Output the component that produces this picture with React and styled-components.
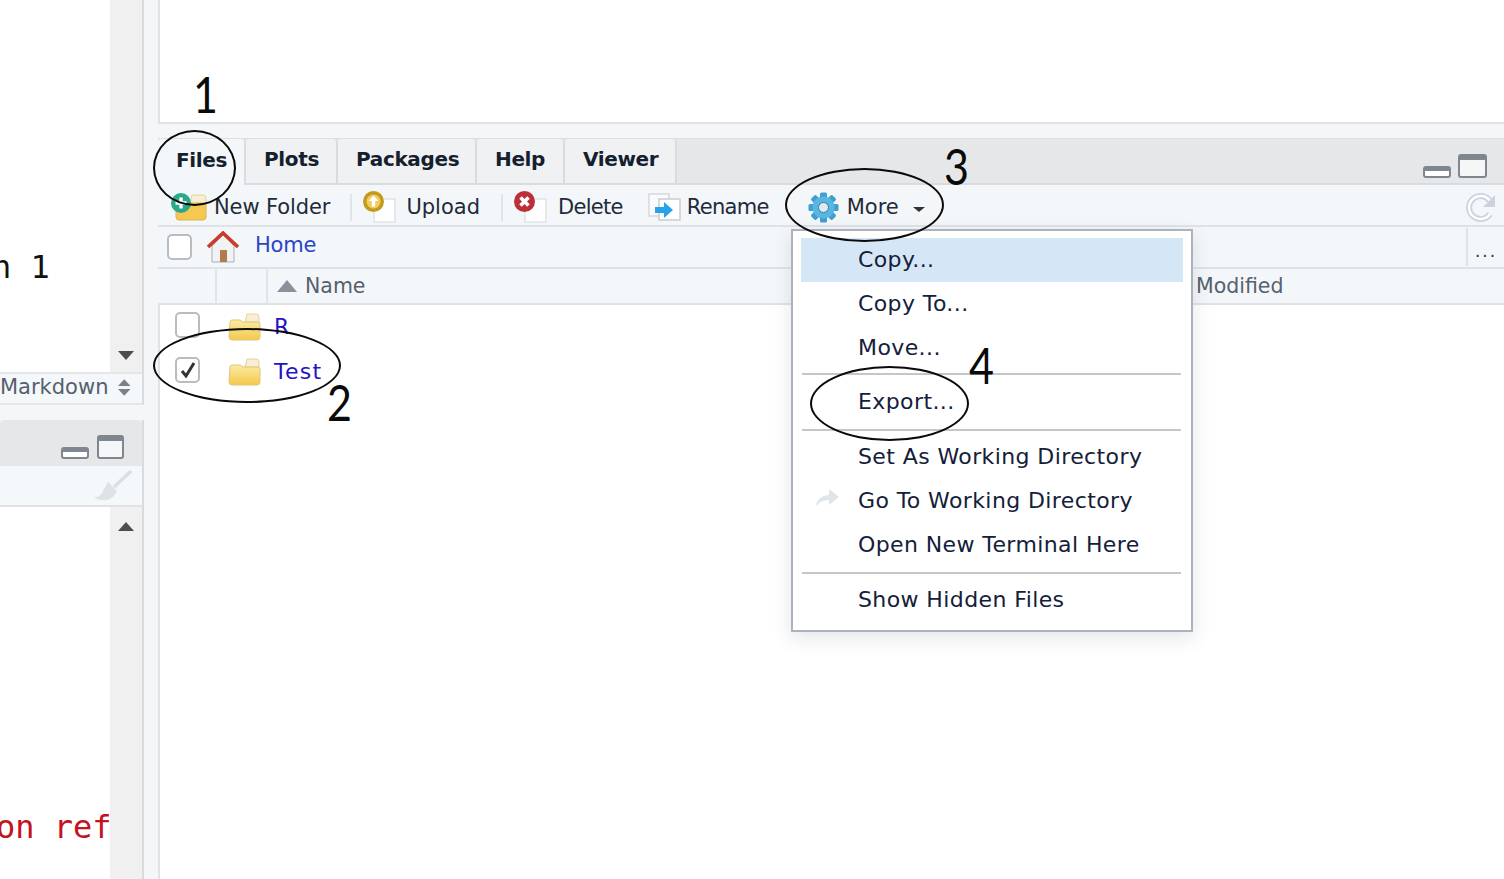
import React from 'react'
import styled, { createGlobalStyle } from 'styled-components'

const GlobalStyle = createGlobalStyle`
    html, body {
        margin: 0;
        padding: 0;
        height: 100%;
        overflow: hidden;
        background: #f4f6f8;
    }
    * {
        box-sizing: border-box;
    }
`

const Page = styled.div`
    position: relative;
    width: 1504px;
    height: 879px;
    display: flex;
    overflow: hidden;
    font-family: 'DejaVu Sans', Verdana, sans-serif;
    color: #1f2a3a;
`

/* left column */
const LeftColumn = styled.div`
    width: 144px;
    flex: none;
    display: flex;
    flex-direction: column;
`

const SourcePane = styled.div`
    height: 405px;
    flex: none;
    display: flex;
    flex-direction: column;
    border-right: 2px solid #d7dce1;
    border-bottom: 2px solid #e3e7ea;
`

const EditorBody = styled.div`
    flex: 1;
    display: flex;
    min-height: 0;
`

const CodeArea = styled.div`
    flex: 1;
    min-width: 0;
    overflow: hidden;
    background: #fff;
    padding-top: ${(p) => p.$top}px;
`

const CodeLine = styled.div`
    font-family: 'DejaVu Sans Mono', monospace;
    font-size: 32px;
    line-height: 36px;
    white-space: pre;
    color: ${(p) => p.$color};
    margin-left: ${(p) => p.$shift}px;
`

const ScrollTrack = styled.div`
    width: 32px;
    flex: none;
    background: #f0f0f1;
    display: flex;
    flex-direction: column;
    align-items: center;
    justify-content: ${(p) => (p.$up ? 'flex-start' : 'flex-end')};
    padding: ${(p) => (p.$up ? '15px 0 0' : '0 0 12px')};
`

const Arrow = styled.div`
    width: 0;
    height: 0;
    border-left: 8px solid transparent;
    border-right: 8px solid transparent;
    border-top: ${(p) => (p.$up ? '0' : '9px solid #4d4d4d')};
    border-bottom: ${(p) => (p.$up ? '9px solid #4d4d4d' : '0')};
`

const StatusBar = styled.div`
    height: 31px;
    flex: none;
    display: flex;
    align-items: center;
    justify-content: flex-end;
    gap: 10px;
    padding: 0 11px 3px 0;
    background: #f5f8fa;
    border-top: 2px solid #e3e7ea;
    font-size: 21px;
    color: #56606e;
    overflow: hidden;
    white-space: nowrap;
`

const ConsolePane = styled.div`
    margin-top: 15px;
    flex: 1;
    min-height: 0;
    display: flex;
    flex-direction: column;
    border-right: 2px solid #d7dce1;
`

const ConsoleHeader = styled.div`
    height: 46px;
    flex: none;
    display: flex;
    align-items: flex-end;
    justify-content: flex-end;
    gap: 8px;
    padding: 0 18px 7px 0;
    background: #e6e7e9;
    border-radius: 4px 4px 0 0;
`

const ConsoleTools = styled.div`
    height: 41px;
    flex: none;
    display: flex;
    align-items: center;
    justify-content: flex-end;
    padding-right: 10px;
    background: #f5f8fa;
    border-bottom: 2px solid #dfe3e7;
`

/* right column */
const RightColumn = styled.div`
    position: relative;
    flex: 1;
    min-width: 0;
    margin-left: 14px;
    display: flex;
    flex-direction: column;
`

const TopPane = styled.div`
    height: 124px;
    flex: none;
    background: #fff;
    border-left: 2px solid #dfe3e7;
    border-bottom: 2px solid #dfe3e7;
`

const TabBar = styled.div`
    margin-top: 14px;
    height: 47px;
    flex: none;
    display: flex;
    align-items: stretch;
    background: #e6e7e9;
    border-top: 1px solid #dcdfe2;
    border-bottom: 2px solid #d8dce0;
    padding-right: 17px;
`

const Tab = styled.div`
    width: ${(p) => p.$w}px;
    flex: none;
    display: flex;
    align-items: center;
    padding: 0 0 4px 18px;
    font-size: 20px;
    font-weight: 700;
    letter-spacing: -0.35px;
    color: #14202e;
    background: ${(p) => (p.$active ? '#f4f7f9' : '#f0f1f2')};
    border-right: 2px solid #d8dce0;
    border-radius: 4px 4px 0 0;
    margin-bottom: ${(p) => (p.$active ? '-2px' : '0')};
`

const WindowButtons = styled.div`
    margin-left: auto;
    display: flex;
    align-items: flex-end;
    gap: 7px;
    padding-bottom: 5px;
`

const Toolbar = styled.div`
    height: 42px;
    flex: none;
    display: flex;
    align-items: center;
    background: #f4f7f9;
    border-bottom: 2px solid #dfe3e7;
    padding: 4px 8px 0 12px;
    font-size: 21px;
    white-space: nowrap;
`

const ToolButton = styled.div`
    display: flex;
    align-items: center;
    gap: ${(p) => p.$gap}px;
    margin-left: ${(p) => p.$left || 0}px;
`

const ToolLabel = styled.span`
    letter-spacing: ${(p) => p.$spacing || 0}px;
`

const ToolSeparator = styled.div`
    width: 2px;
    height: 27px;
    margin-left: ${(p) => p.$left}px;
    background: #e1e5e8;
`

const ToolSpacer = styled.div`
    flex: 1;
`

const Caret = styled.div`
    width: 0;
    height: 0;
    margin-top: 5px;
    margin-left: 6px;
    border-left: 6px solid transparent;
    border-right: 6px solid transparent;
    border-top: 5px solid #333;
`

const PathBar = styled.div`
    height: 42px;
    flex: none;
    display: flex;
    align-items: center;
    background: #f4f7f9;
    border-bottom: 2px solid #dfe3e7;
    padding-left: 9px;
`

const PathLink = styled.span`
    margin-left: 15px;
    padding-bottom: 4px;
    font-size: 21px;
    letter-spacing: -0.2px;
    color: #2a44c8;
`

const PathMore = styled.div`
    margin-left: auto;
    width: 38px;
    height: 38px;
    display: flex;
    align-items: flex-end;
    justify-content: center;
    padding-bottom: 6px;
    border-left: 2px solid #dfe3e7;
    font-size: 17px;
    letter-spacing: 2px;
    line-height: 1;
    color: #333;
`

const Check = styled.div`
    width: 25px;
    height: 26px;
    flex: none;
    display: flex;
    align-items: center;
    justify-content: center;
    margin-bottom: ${(p) => p.$lift || 0}px;
    background: #fff;
    border: 2px solid #b9bcc0;
    border-radius: 5px;
`

const HeaderRow = styled.div`
    height: 36px;
    flex: none;
    display: flex;
    align-items: center;
    background: #f4f7f9;
    border-bottom: 2px solid #dfe3e7;
    font-size: 20.5px;
    color: #56606e;
`

const HeaderCell = styled.div`
    width: ${(p) => p.$w}px;
    height: 100%;
    flex: none;
    display: flex;
    align-items: center;
    gap: 8px;
    padding-left: ${(p) => p.$pad || 0}px;
    border-right: ${(p) => (p.$line ? '2px solid #e1e5e8' : '0')};
`

const SortMark = styled.div`
    width: 0;
    height: 0;
    border-left: 10px solid transparent;
    border-right: 10px solid transparent;
    border-bottom: 12px solid #8b919c;
`

const FileList = styled.div`
    flex: 1;
    min-height: 0;
    background: #fff;
    border-left: 2px solid #dfe3e7;
`

const FileRow = styled.div`
    height: 45px;
    display: flex;
    align-items: center;
    padding-left: 15px;
`

const FolderSlot = styled.div`
    display: flex;
    margin: 0 0 2px 28px;
`

const FileName = styled.span`
    margin-left: 13px;
    padding-bottom: 2px;
    font-size: 22px;
    letter-spacing: 1.3px;
    color: #2413c4;
`

/* overlays */
const Menu = styled.div`
    position: absolute;
    left: 633px;
    top: 229px;
    width: 402px;
    height: 403px;
    padding: 7px 8px;
    background: #fff;
    border: 2px solid #adb2bf;
    box-shadow: 0 6px 18px rgba(60, 70, 90, 0.14);
    font-size: 22px;
    letter-spacing: 0.4px;
    color: #14203a;
`

const MenuRow = styled.div`
    position: relative;
    width: 382px;
    height: 44px;
    display: flex;
    align-items: center;
    padding: 0 0 2px 57px;
    white-space: nowrap;
    background: ${(p) => (p.$selected ? '#d5e6f6' : 'transparent')};
`

const MenuIcon = styled.div`
    position: absolute;
    left: 14px;
    top: 9px;
    display: flex;
`

const MenuRule = styled.div`
    width: 379px;
    height: 2px;
    margin: ${(p) => p.$above}px 0 ${(p) => p.$below}px 1px;
    background: #c3c6cb;
`

const Ring = styled.div`
    position: absolute;
    left: ${(p) => p.$x}px;
    top: ${(p) => p.$y}px;
    width: ${(p) => p.$w}px;
    height: ${(p) => p.$h}px;
    border: 2px solid #0a0a0a;
    border-radius: 50%;
    pointer-events: none;
`

const Numeral = styled.div`
    position: absolute;
    left: ${(p) => p.$x}px;
    top: ${(p) => p.$y}px;
    font-family: Lato, 'Open Sans', sans-serif;
    font-size: 50px;
    line-height: 50px;
    color: #0a0a0a;
    transform: scaleX(0.86);
    transform-origin: left center;
`

/* icons */
const MinimizeIcon = () => (
    <svg width="28" height="12" viewBox="0 0 28 12">
        <rect x="1" y="1" width="26" height="10" rx="2" fill="#fff" stroke="#7e8790" strokeWidth="2" />
        <rect x="1" y="1" width="26" height="4" rx="1.5" fill="#7e8790" />
    </svg>
)

const MaximizeIcon = ({ w = 29 }) => (
    <svg width={w} height="24" viewBox={`0 0 ${w} 24`}>
        <rect x="1" y="1" width={w - 2} height="22" rx="2" fill="#f4f6f8" stroke="#7e8790" strokeWidth="2" />
        <rect x="1" y="1" width={w - 2} height="5" rx="1.5" fill="#7e8790" />
    </svg>
)

const Folder = () => (
    <svg width="33" height="28" viewBox="0 0 33 28">
        <defs>
            <linearGradient id="folderFill" x1="0" y1="0" x2="0" y2="1">
                <stop offset="0" stopColor="#fdeaa2" />
                <stop offset="1" stopColor="#f2c94c" />
            </linearGradient>
        </defs>
        <path d="M19 1h9q3 0 3 3v5H17z" fill="#f6efd6" stroke="#e6d49b" />
        <path d="M2 9q0-2 2-2h8l3 2h15q2 0 2 2v13q0 3-3 3H4q-3 0-3-3z" fill="url(#folderFill)" stroke="#e2c679" />
    </svg>
)

const NewFolderIcon = () => (
    <svg width="38" height="28" viewBox="0 0 38 28">
        <path d="M22 2h11q3 0 3 3v6H20z" fill="#f6efd6" stroke="#e6d49b" />
        <path d="M6 10h30v14q0 3-3 3H9q-3 0-3-3z" fill="#f5c94f" stroke="#d9b552" />
        <circle cx="11" cy="10" r="10" fill="#27a98a" />
        <path d="M11 4.500v11M5.500 10h11" stroke="#fff" strokeWidth="3.4" />
    </svg>
)

const PageCorner = () => (
    <rect x="11" y="8" width="21" height="23" fill="#fff" stroke="#dfe2e5" strokeWidth="1.5" />
)

const UploadIcon = () => (
    <svg width="33" height="33" viewBox="0 0 33 33">
        <PageCorner />
        <circle cx="10.500" cy="10.500" r="10.500" fill="#c39a1c" />
        <circle cx="10.500" cy="10.500" r="7" fill="#f0cd62" />
        <path d="M10.500 4.500l5 5.500H12.200v5.500H8.800V10H5.500z" fill="#fff" />
    </svg>
)

const DeleteIcon = () => (
    <svg width="33" height="33" viewBox="0 0 33 33">
        <PageCorner />
        <circle cx="10.500" cy="10.500" r="10.500" fill="#bb2f38" />
        <path d="M6.500 6.500l8 8M14.500 6.500l-8 8" stroke="#fff" strokeWidth="3.6" />
    </svg>
)

const RenameIcon = () => (
    <svg width="33" height="28" viewBox="0 0 33 28">
        <rect x="1" y="1" width="20" height="22" fill="#fafbfc" stroke="#d5d8dc" strokeWidth="1.5" />
        <rect x="11" y="6" width="21" height="21" fill="#fff" stroke="#c9cdd2" strokeWidth="1.5" />
        <path d="M7 14h9V9l9 8-9 8v-5H7z" fill="#25a4ea" />
    </svg>
)

const GEAR_TEETH = [0, 45, 90, 135, 180, 225, 270, 315]

const GearIcon = () => (
    <svg width="31" height="31" viewBox="0 0 31 31">
        {GEAR_TEETH.map((deg) => (
            <rect key={deg} x="12" y="0.5" width="7" height="8" rx="1.5" fill="#3f9fd0" transform={`rotate(${deg} 15.5 15.5)`} />
        ))}
        <circle cx="15.5" cy="15.5" r="11" fill="#58b6e0" />
        <circle cx="15.5" cy="15.5" r="5" fill="#dfeaf0" stroke="#2f7fa8" />
    </svg>
)

const RefreshIcon = () => (
    <svg width="31" height="31" viewBox="0 0 31 31">
        <path d="M25 22a11.500 11.500 0 1 1 0-13" fill="none" stroke="#ccd3de" strokeWidth="6" />
        <path d="M25 22a11.500 11.500 0 1 1 0-13" fill="none" stroke="#fff" strokeWidth="2.5" />
        <path d="M30 3v12H18z" fill="#ccd3de" />
    </svg>
)

const HomeIcon = () => (
    <svg width="34" height="32" viewBox="0 0 34 32">
        <path d="M6 15L17 4l11 11v16H6z" fill="#f1f2f3" stroke="#a9aeb4" />
        <rect x="14" y="19" width="7" height="12" fill="#b07d4a" />
        <path d="M2 16L17 2l15 14" fill="none" stroke="#cf3a2a" strokeWidth="3.6" />
    </svg>
)

const CheckMark = () => (
    <svg width="18" height="18" viewBox="0 0 18 18">
        <path d="M3 10l4 5L15 2" fill="none" stroke="#333" strokeWidth="3" />
    </svg>
)

const UpDown = () => (
    <svg width="13" height="19" viewBox="0 0 13 19">
        <path d="M6.500 1L13 8H0zM0 11h13l-6.500 7z" fill="#7d8087" />
    </svg>
)

const BroomIcon = () => (
    <svg width="38" height="32" viewBox="0 0 38 32">
        <path d="M37 1L20 17" stroke="#dcdfe2" strokeWidth="3.500" />
        <path d="M14 12l9 9q-3 7-10 9-6 1-13-2 8-2 9-7z" fill="#dfe2e5" />
    </svg>
)

const ForwardIcon = () => (
    <svg width="25" height="20" viewBox="0 0 25 20">
        <path d="M1 18q1-10 13-11V1l10 8-10 8v-5q-8 0-13 6z" fill="#dfe5ea" />
    </svg>
)

const MENU_GROUPS = [
    { items: ['Copy...', 'Copy To...', 'Move...'], above: 3, below: 5 },
    { items: ['Export...'], above: 5, below: 4 },
    { items: ['Set As Working Directory', 'Go To Working Directory', 'Open New Terminal Here'], above: 5, below: 4 },
    { items: ['Show Hidden Files'] },
]

const TABS = [
    { name: 'Files', w: 88, active: true },
    { name: 'Plots', w: 92 },
    { name: 'Packages', w: 139 },
    { name: 'Help', w: 88 },
    { name: 'Viewer', w: 112 },
]

const MoreMenu = () => (
    <Menu>
        {MENU_GROUPS.map((group) => (
            <React.Fragment key={group.items[0]}>
                {group.items.map((item) => (
                    <MenuRow key={item} $selected={item === 'Copy...'}>
                        {item === 'Go To Working Directory' && (
                            <MenuIcon>
                                <ForwardIcon />
                            </MenuIcon>
                        )}
                        {item}
                    </MenuRow>
                ))}
                {group.above && <MenuRule $above={group.above} $below={group.below} />}
            </React.Fragment>
        ))}
    </Menu>
)

export default function App() {
    return (
        <Page>
            <GlobalStyle />
            <LeftColumn>
                <SourcePane>
                    <EditorBody>
                        <CodeArea $top={249}>
                            <CodeLine $color="#111" $shift={-8}>n 1</CodeLine>
                        </CodeArea>
                        <ScrollTrack>
                            <Arrow />
                        </ScrollTrack>
                    </EditorBody>
                    <StatusBar>
                        Markdown
                        <UpDown />
                    </StatusBar>
                </SourcePane>
                <ConsolePane>
                    <ConsoleHeader>
                        <MinimizeIcon />
                        <MaximizeIcon w={27} />
                    </ConsoleHeader>
                    <ConsoleTools>
                        <BroomIcon />
                    </ConsoleTools>
                    <EditorBody>
                        <CodeArea $top={302}>
                            <CodeLine $color="#c4121f" $shift={-4}>on ref</CodeLine>
                        </CodeArea>
                        <ScrollTrack $up>
                            <Arrow $up />
                        </ScrollTrack>
                    </EditorBody>
                </ConsolePane>
            </LeftColumn>
            <RightColumn>
                <TopPane />
                <TabBar>
                    {TABS.map((tab) => (
                        <Tab key={tab.name} $active={tab.active} $w={tab.w}>{tab.name}</Tab>
                    ))}
                    <WindowButtons>
                        <MinimizeIcon />
                        <MaximizeIcon />
                    </WindowButtons>
                </TabBar>
                <Toolbar>
                    <ToolButton $gap={6}>
                        <NewFolderIcon />
                        <ToolLabel $spacing={-0.1}>New Folder</ToolLabel>
                    </ToolButton>
                    <ToolSeparator $left={20} />
                    <ToolButton $gap={10} $left={11}>
                        <UploadIcon />
                        <ToolLabel>Upload</ToolLabel>
                    </ToolButton>
                    <ToolSeparator $left={21} />
                    <ToolButton $gap={11} $left={11}>
                        <DeleteIcon />
                        <ToolLabel $spacing={-0.7}>Delete</ToolLabel>
                    </ToolButton>
                    <ToolButton $gap={6} $left={25}>
                        <RenameIcon />
                        <ToolLabel $spacing={-0.7}>Rename</ToolLabel>
                    </ToolButton>
                    <ToolButton $gap={8} $left={39}>
                        <GearIcon />
                        <ToolLabel>More</ToolLabel>
                        <Caret />
                    </ToolButton>
                    <ToolSpacer />
                    <RefreshIcon />
                </Toolbar>
                <PathBar>
                    <Check />
                    <ToolButton $gap={0} $left={14}>
                        <HomeIcon />
                    </ToolButton>
                    <PathLink>Home</PathLink>
                    <PathMore>...</PathMore>
                </PathBar>
                <HeaderRow>
                    <HeaderCell $w={59} $line />
                    <HeaderCell $w={51} $line />
                    <HeaderCell $w={928} $pad={9}>
                        <SortMark />
                        Name
                    </HeaderCell>
                    <HeaderCell $w={200}>Modified</HeaderCell>
                </HeaderRow>
                <FileList>
                    <FileRow>
                        <Check $lift={6} />
                        <FolderSlot>
                            <Folder />
                        </FolderSlot>
                        <FileName>R</FileName>
                    </FileRow>
                    <FileRow>
                        <Check $lift={6}>
                            <CheckMark />
                        </Check>
                        <FolderSlot>
                            <Folder />
                        </FolderSlot>
                        <FileName>Test</FileName>
                    </FileRow>
                </FileList>
                <MoreMenu />
            </RightColumn>
            <Ring $x={153} $y={130} $w={83} $h={76} />
            <Ring $x={153} $y={328} $w={188} $h={75} />
            <Ring $x={785} $y={168} $w={159} $h={74} />
            <Ring $x={810} $y={366} $w={159} $h={75} />
            <Numeral $x={193} $y={69}>1</Numeral>
            <Numeral $x={327} $y={377}>2</Numeral>
            <Numeral $x={944} $y={141}>3</Numeral>
            <Numeral $x={969} $y={340}>4</Numeral>
        </Page>
    )
}
